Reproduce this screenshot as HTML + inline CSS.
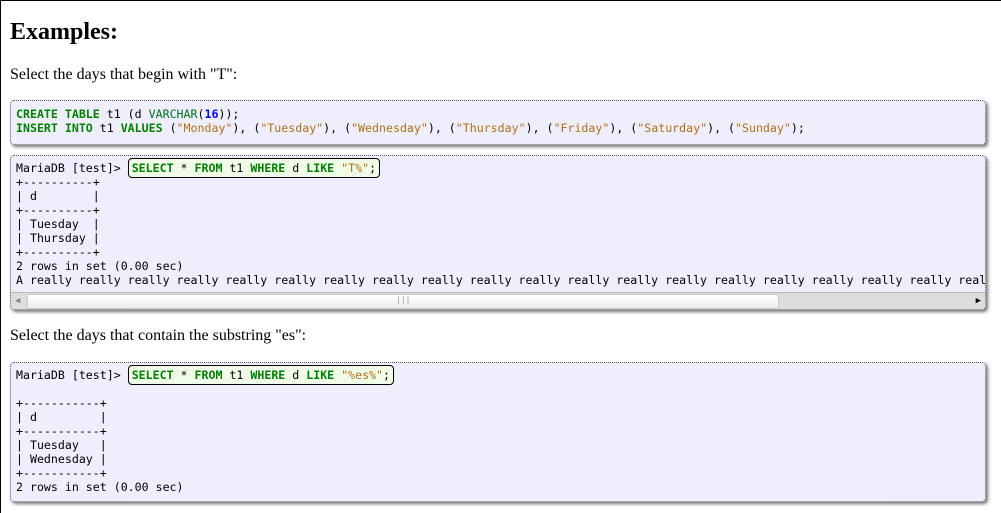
<!DOCTYPE html>
<html><head><meta charset="utf-8"><style>
html,body{margin:0;padding:0;background:#fff}
body{width:1000px;height:512px;border-top:1px solid #000;border-left:1px solid #000;overflow:hidden;position:relative;font-family:"Liberation Serif",serif;color:#000}
h2{position:absolute;left:9px;top:17px;margin:0;font-size:24px;font-weight:bold;line-height:28px}
p{position:absolute;left:9px;margin:0;font-size:16px;line-height:20px}
.box{position:absolute;left:9px;width:976px;background:#eeeefc;border:1px dotted #555;border-radius:4px;box-shadow:2px 2px 3px #777;font-family:"DejaVu Sans Mono","Liberation Mono",monospace;font-size:11.6px;line-height:14px;white-space:pre;overflow:hidden;box-sizing:border-box;padding:6px 5px}
.k{color:#008000;font-weight:bold}.s{color:#b0701a}.n{color:#0000ff;font-weight:bold}
.q{display:inline;border:1px solid #000;border-radius:4px;background:#effce8;padding:2px 3px 2px 3px}
.sb{position:absolute;left:0;right:0;bottom:0;height:16px;background:#ddd;border-top:1px solid #bbb}
.th{position:absolute;left:16px;width:750px;top:1px;height:13px;background:linear-gradient(#fff,#eee);border:1px solid #ccc}
</style></head><body>
<h2>Examples:</h2>
<p style="top:64px">Select the days that begin with "T":</p>
<div class="box" style="top:99px;height:45px;padding-top:6px"><span class="k">CREATE TABLE</span> t1 (d <span style="color:#007020">VARCHAR</span>(<span class="n">16</span>));
<span class="k">INSERT INTO</span> t1 <span class="k">VALUES</span> (<span class="s">"Monday"</span>), (<span class="s">"Tuesday"</span>), (<span class="s">"Wednesday"</span>), (<span class="s">"Thursday"</span>), (<span class="s">"Friday"</span>), (<span class="s">"Saturday"</span>), (<span class="s">"Sunday"</span>);</div>
<div class="box" style="top:154px;height:155px;padding-top:5px">MariaDB [test]&gt; <span class="q"><span class="k">SELECT</span> * <span class="k">FROM</span> t1 <span class="k">WHERE</span> d <span class="k">LIKE</span> <span class="s">"T%"</span>;</span>
+----------+
| d        |
+----------+
| Tuesday  |
| Thursday |
+----------+
2 rows in set (0.00 sec)
A really really really really really really really really really really really really really really really really really really really really really
<div class="sb"><div class="th"></div><span style="position:absolute;left:4px;top:1px;font-size:9px;color:#888">◀</span><span style="position:absolute;right:4px;top:1px;font-size:9px;color:#000">▶</span><span style="position:absolute;left:385px;top:0;font-size:8px;color:#999">|||</span></div></div>
<p style="top:325px">Select the days that contain the substring "es":</p>
<div class="box" style="top:361px;height:140px;padding-top:5px">MariaDB [test]&gt; <span class="q"><span class="k">SELECT</span> * <span class="k">FROM</span> t1 <span class="k">WHERE</span> d <span class="k">LIKE</span> <span class="s">"%es%"</span>;</span>

+-----------+
| d         |
+-----------+
| Tuesday   |
| Wednesday |
+-----------+
2 rows in set (0.00 sec)</div>
</body></html>
